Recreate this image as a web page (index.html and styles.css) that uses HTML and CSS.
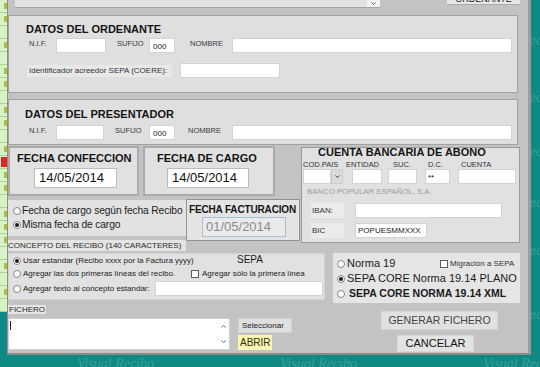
FILE: index.html
```html
<!DOCTYPE html>
<html lang="es">
<head>
<meta charset="utf-8">
<title>Generar fichero</title>
<link rel="stylesheet" href="styles.css">
</head>
<body>
<div class="wm wm-r1">Visual Recibo</div>
<div class="wm wm-r2">Visual Recibo</div>
<div class="wm wm-r3">Visual Recibo</div>
<div class="wm wm-r4">Visual Recibo</div>
<div class="wm wm-r5">Visual Recibo</div>
<div class="wm wm-r6">Visual Recibo</div>
<div class="wm wm-b1">Visual Recibo</div>
<div class="wm wm-b2">Visual Recibo</div>
<div class="wm wm-b3">Visual Recibo</div>

<div class="strip">
  <div class="cell"><span class="mk"></span></div>
  <div class="cell"><span class="mk"></span></div>
  <div class="cell"></div>
  <div class="cell"><span class="mk"></span></div>
  <div class="cell"></div>
  <div class="cell"><span class="mk"></span></div>
  <div class="cell"><span class="mk"></span></div>
  <div class="cell"></div>
  <div class="cell"><span class="mk"></span></div>
  <div class="cell"><span class="mk"></span></div>
  <div class="cell"></div>
  <div class="cell"><span class="mk"></span></div>
  <div class="cell"><span class="mk red"></span></div>
  <div class="cell"><span class="mk"></span></div>
  <div class="cell"><span class="mk"></span></div>
  <div class="cell"></div>
  <div class="cell"><span class="mk"></span></div>
  <div class="cell"><span class="mk"></span></div>
  <div class="cell"><span class="mk"></span></div>
  <div class="cell"></div>
  <div class="cell"><span class="mk"></span></div>
  <div class="cell"></div>
  <div class="cell"><span class="mk"></span></div>
  <div class="cell"></div>
</div>

<div class="dlg">
  <div class="toprow">
    <div class="combo"><span class="combo-arrow"><svg width="5" height="3" viewBox="0 0 5 3"><path d="M0.5 0.5 L2.5 2.5 L4.5 0.5" fill="none" stroke="#555" stroke-width="1"/></svg></span></div>
    <div class="topbtn"><span>ORDENANTE</span></div>
  </div>

  <div class="panel ord">
    <div class="ptitle">DATOS DEL ORDENANTE</div>
    <div class="frow ord-r1">
      <span class="lbl o-nif">N.I.F.</span><span class="inp o-nifin"></span>
      <span class="lbl o-suf">SUFIJO</span><span class="inp suf">000</span>
      <span class="lbl o-nom">NOMBRE</span><span class="inp nom"></span>
    </div>
    <div class="frow ord-r2">
      <span class="coere">Identificador acreedor SEPA (COERE):</span><span class="inp coere-in"></span>
    </div>
  </div>

  <div class="panel pre">
    <div class="ptitle">DATOS DEL PRESENTADOR</div>
    <div class="frow pre-r1">
      <span class="lbl p-nif">N.I.F.</span><span class="inp p-nifin"></span>
      <span class="lbl p-suf">SUFIJO</span><span class="inp suf">000</span>
      <span class="lbl p-nom">NOMBRE</span><span class="inp nom"></span>
    </div>
  </div>

  <div class="mid">
    <div class="midleft">
      <div class="fechas">
        <div class="fbox fb1"><div class="ftitle">FECHA CONFECCION</div><div class="finp">14/05/2014</div></div>
        <div class="fbox fb2"><div class="ftitle">FECHA DE CARGO</div><div class="finp">14/05/2014</div></div>
      </div>
      <div class="row2">
        <div class="rpanel">
          <div class="rrow"><span class="rb"></span><span class="rt">Fecha de cargo según fecha Recibo</span></div>
          <div class="rrow"><span class="rb on"></span><span class="rt">Misma fecha de cargo</span></div>
        </div>
        <div class="factbox">
          <div class="facttitle">FECHA FACTURACION</div>
          <div class="factinp">01/05/2014</div>
        </div>
      </div>
      <div class="conlabel">CONCEPTO DEL RECIBO (140 CARACTERES)</div>
    </div>

    <div class="panel cuenta">
      <div class="ctitle">CUENTA BANCARIA DE ABONO</div>
      <div class="clabels"><span class="cl1">COD.PAIS</span><span class="cl2">ENTIDAD</span><span class="cl3">SUC.</span><span class="cl4">D.C.</span><span>CUENTA</span></div>
      <div class="cinputs">
        <span class="inp c-sel"></span><span class="c-selbtn"><svg width="5" height="3" viewBox="0 0 5 3"><path d="M0.5 0.5 L2.5 2.5 L4.5 0.5" fill="none" stroke="#444" stroke-width="1"/></svg></span>
        <span class="inp c-ent"></span>
        <span class="inp c-suc"></span>
        <span class="inp c-dc">**</span>
        <span class="inp c-cta"></span>
      </div>
      <div class="banco">BANCO POPULAR ESPAÑOL, S.A.</div>
      <div class="crow iban"><span class="clab">IBAN:</span><span class="inp c-iban"></span></div>
      <div class="crow bic"><span class="clab">BIC</span><span class="inp c-bic">POPUESMMXXX</span></div>
    </div>
  </div>

  <div class="lower">
    <div class="concept">
      <div class="kr kr1"><span class="rb on"></span><span class="ct ct1">Usar estandar (Recibo xxxx por la Factura yyyy)</span><span class="sepa">SEPA</span></div>
      <div class="kr kr2"><span class="rb"></span><span class="ct ct2">Agregar las dos primeras líneas del recibo.</span><span class="cb"></span><span class="ct ct2b">Agregar sólo la primera línea</span></div>
      <div class="kr kr3"><span class="rb"></span><span class="ct ct3">Agregar texto al concepto estandar:</span><span class="inp con-in"></span></div>
    </div>
    <div class="opts">
      <div class="or"><span class="rb"></span><span class="ot ot1">Norma 19</span><span class="cb"></span><span class="mig">Migración a SEPA</span></div>
      <div class="or"><span class="rb on"></span><span class="ot">SEPA CORE Norma 19.14 PLANO</span></div>
      <div class="or"><span class="rb"></span><span class="ot ot3">SEPA CORE NORMA 19.14 XML</span></div>
    </div>
  </div>

  <div class="bottom">
    <div class="bleft">
      <div class="fich">FICHERO</div>
      <div class="frow2">
        <div class="ta">
          <div class="ta-body"><span class="caret"></span></div>
          <div class="ta-scroll">
            <svg width="5" height="3" viewBox="0 0 5 3"><path d="M0.5 2.5 L2.5 0.5 L4.5 2.5" fill="none" stroke="#666" stroke-width="1"/></svg>
            <svg width="5" height="3" viewBox="0 0 5 3"><path d="M0.5 0.5 L2.5 2.5 L4.5 0.5" fill="none" stroke="#666" stroke-width="1"/></svg>
          </div>
        </div>
        <div class="bbtns">
          <div class="selbtn">Seleccionar</div>
          <div class="abrir">ABRIR</div>
        </div>
      </div>
    </div>
    <div class="bright">
      <div class="gen">GENERAR FICHERO</div>
      <div class="can">CANCELAR</div>
    </div>
  </div>
</div>
</body>
</html>
```

FILE: styles.css
```css
* { box-sizing: border-box; }
body {
  margin: 0;
  width: 540px;
  height: 367px;
  overflow: hidden;
  position: relative;
  background: #0e8983;
  font-family: "Liberation Sans", Arial, sans-serif;
  color: #1e1e1e;
}

/* desktop watermark */
.wm {
  position: absolute;
  font: italic 14px/14px "Liberation Serif", serif;
  color: #3aa097;
  white-space: nowrap;
}
.wm-r1 { left: 483px; top: 34px; }
.wm-r2 { left: 483px; top: 91px; }
.wm-r3 { left: 483px; top: 145px; }
.wm-r4 { left: 483px; top: 196px; }
.wm-r5 { left: 483px; top: 244px; }
.wm-r6 { left: 483px; top: 308px; }
.wm-b1 { left: 77px; top: 357px; }
.wm-b2 { left: 280px; top: 357px; }
.wm-b3 { left: 483px; top: 357px; }

/* list strip on the left */
.strip {
  position: absolute;
  left: 0;
  top: 0;
  width: 7px;
  height: 312px;
  background: #d8f3c8;
  display: flex;
  flex-direction: column;
}
.cell {
  height: 13px;
  border-bottom: 1px solid #a3d88b;
  display: flex;
  align-items: center;
  justify-content: flex-end;
}
.mk { width: 3px; height: 6px; background: #b6bd3c; }
.mk.red { width: 6px; height: 10px; background: #e3241f; }

/* dialog window */
.dlg {
  position: absolute;
  left: 7px;
  top: 0;
  width: 524px;
  height: 355px;
  background: #c3c3c3;
  border-left: 1px solid #8e8e8e;
  border-right: 3px solid #9d9d9d;
  border-bottom: 2px solid #8a8a8a;
  display: flex;
  flex-direction: column;
  align-items: flex-start;
}

.toprow { display: flex; align-items: flex-start; height: 9px; }
.combo {
  margin-left: 7px;
  width: 365px;
  height: 8px;
  background: #e3e3e3;
  border-bottom: 1px solid #a4a4a4;
  display: flex;
  justify-content: flex-end;
}
.combo-arrow {
  width: 13px;
  height: 7px;
  background: #f3f3f3;
  display: flex;
  align-items: center;
  justify-content: center;
}
.topbtn {
  margin-left: 67px;
  width: 73px;
  height: 5px;
  background: #e6e6e6;
  border-bottom: 1px solid #ababab;
  overflow: hidden;
  font-size: 9px;
  line-height: 9px;
  text-align: center;
  color: #222;
}
.topbtn span { display: block; margin-top: -5px; }

.panel { background: #dfdfdf; border: 1px solid #a2a2a2; }
.ptitle { font-weight: bold; font-size: 11px; line-height: 13px; color: #151515; white-space: nowrap; }

.frow { display: flex; align-items: flex-start; height: 15px; }
.lbl { font-size: 7.5px; line-height: 9px; margin-top: 1px; color: #3a3a3a; white-space: nowrap; }
.inp { display: block; height: 15px; background: #fff; border: 1px solid #d3d3d3; font-size: 8px; color: #1a1a1a; white-space: nowrap; }

.ord { margin-top: 6px; width: 510px; height: 78px; padding-top: 7px; }
.ord .ptitle { padding-left: 17px; }
.ord-r1 { margin-top: 2px; padding-left: 20px; }
.o-nif { width: 27px; }
.o-nifin { width: 50px; }
.o-suf { margin-left: 11px; width: 32px; }
.o-nom { margin-left: 15px; width: 42px; }
.suf { width: 26px; padding: 1px 0 0 3px; line-height: 13px; }
.nom { width: 280px; }
.ord-r2 { margin-top: 10px; padding-left: 18px; }
.coere {
  margin-top: 2px;
  width: 145px;
  height: 12px;
  padding-left: 2px;
  background: #e8e8e8;
  font-size: 8px;
  line-height: 12px;
  color: #333;
  white-space: nowrap;
}
.coere-in { margin-left: 8px; width: 100px; }

.pre { margin-top: 6px; width: 510px; height: 46px; padding-top: 8px; }
.pre .ptitle { padding-left: 16px; }
.pre-r1 { margin-top: 4px; padding-left: 20px; }
.p-nif { width: 27px; }
.p-nifin { width: 48px; }
.p-suf { margin-left: 11px; width: 34px; }
.p-nom { margin-left: 13px; width: 44px; }

/* middle block */
.mid { margin-top: 1px; display: flex; align-items: flex-start; height: 105px; }
.midleft { width: 292px; display: flex; flex-direction: column; align-items: flex-start; }
.fechas { display: flex; height: 50px; }
.fbox { height: 50px; border: 2px solid #ababab; background: #e1e1e1; padding-top: 4px; }
.fb1 { width: 131px; padding-left: 7px; }
.fb2 { margin-left: 4px; width: 132px; padding-left: 12px; }
.ftitle { font-weight: bold; font-size: 11px; line-height: 13px; color: #151515; white-space: nowrap; }
.finp {
  margin-top: 3px;
  width: 83px;
  height: 20px;
  background: #fff;
  border: 1px solid #bcbcbc;
  font-size: 13px;
  line-height: 18px;
  padding-left: 4px;
  color: #111;
}
.fb1 .finp { margin-left: 17px; }
.fb2 .finp { margin-left: 10px; width: 82px; }

.row2 { margin-top: 3px; display: flex; align-items: flex-start; height: 42px; }
.rpanel { margin-top: 1px; width: 178px; height: 36px; background: #e2e2e2; padding: 4px 0 0 5px; }
.rrow { display: flex; align-items: center; height: 14px; }
.rt { margin-left: 1px; font-size: 10.3px; line-height: 14px; letter-spacing: -0.15px; white-space: nowrap; color: #1e1e1e; }

.rb {
  width: 8px;
  height: 8px;
  border: 1px solid #858585;
  border-radius: 50%;
  background: #fff;
  display: flex;
  align-items: center;
  justify-content: center;
  flex: none;
}
.rb.on::after { content: ""; width: 4px; height: 4px; border-radius: 50%; background: #1a1a1a; }
.cb { width: 8px; height: 8px; border: 1px solid #5c5c5c; background: #fff; flex: none; }

.factbox { width: 114px; height: 42px; border: 1px solid #929292; background: #e4e4e4; padding: 4px 0 0 2px; }
.facttitle { font-weight: bold; font-size: 10px; line-height: 12px; letter-spacing: -0.15px; color: #151515; white-space: nowrap; }
.factinp {
  margin: 1px 0 0 13px;
  width: 84px;
  height: 20px;
  border: 1px solid #a7bed6;
  background: #eaeaea;
  color: #8a8a8a;
  font-size: 13px;
  line-height: 18px;
  padding-left: 3px;
}
.conlabel {
  margin-top: -1px;
  width: 178px;
  height: 11px;
  background: #e4e4e4;
  font-size: 8px;
  line-height: 11px;
  color: #2a2a2a;
  white-space: nowrap;
}

.cuenta { margin: 1px 0 0 1px; width: 219px; height: 96px; background: #e1e1e1; border-color: #9a9a9a; }
.ctitle { margin-top: -1px; padding-left: 16px; font-weight: bold; font-size: 11px; line-height: 11px; color: #151515; white-space: nowrap; }
.clabels { margin-top: 2px; display: flex; padding-left: 1px; font-size: 7.5px; line-height: 9px; color: #333; white-space: nowrap; }
.cl1 { width: 43px; }
.cl2 { width: 47px; }
.cl3 { width: 35px; }
.cl4 { width: 33px; }
.cinputs { display: flex; padding-left: 1px; height: 15px; }
.c-sel { width: 28px; }
.c-selbtn {
  width: 12px;
  height: 15px;
  background: #dadada;
  border: 1px solid #cdcdcd;
  display: flex;
  align-items: center;
  justify-content: center;
}
.c-ent { margin-left: 9px; width: 30px; }
.c-suc { margin-left: 6px; width: 29px; }
.c-dc { margin-left: 8px; width: 25px; padding-left: 2px; font-size: 8px; line-height: 15px; }
.c-cta { margin-left: 8px; width: 58px; }
.banco { margin-top: 3px; padding-left: 5px; font-size: 7.8px; line-height: 10px; color: #9b9b9b; white-space: nowrap; }
.crow { display: flex; height: 15px; }
.crow.iban { margin-top: 6px; }
.crow.bic { margin-top: 5px; }
.clab { margin-left: 9px; width: 33px; height: 15px; background: #ebebeb; font-size: 8px; line-height: 15px; padding-left: 1px; color: #333; }
.c-iban { margin-left: 11px; width: 147px; }
.c-bic { margin-left: 11px; width: 72px; line-height: 13px; padding-left: 2px; }

/* lower option blocks */
.lower { margin-top: 2px; display: flex; align-items: flex-start; height: 50px; }
.concept { width: 317px; height: 47px; background: #e1e1e1; border: 1px solid #d3d3d3; padding: 1px 0 0 4px; }
.kr { display: flex; align-items: center; }
.kr1 { height: 12px; }
.kr2 { height: 13px; }
.kr3 { margin-top: 1px; height: 15px; }
.ct { margin-left: 2px; font-size: 8px; line-height: 12px; white-space: nowrap; color: #222; }
.ct1 { width: 214px; }
.sepa { align-self: flex-start; margin-top: -1px; font-size: 10px; line-height: 12px; color: #1a1a1a; }
.ct2 { width: 168px; }
.ct2b { margin-left: 3px; }
.ct3 { width: 132px; }
.con-in { width: 168px; }

.opts { margin-left: 8px; width: 187px; height: 50px; background: #e5e5e5; padding: 3px 0 0 4px; }
.or { display: flex; align-items: center; height: 15px; }
.ot { margin-left: 2px; font-size: 11px; line-height: 15px; white-space: nowrap; color: #1a1a1a; }
.ot1 { width: 93px; }
.mig { margin-left: 2px; font-size: 8px; color: #333; white-space: nowrap; }
.ot3 { margin-left: 4px; font-weight: bold; font-size: 10.5px; }

/* bottom: file + buttons */
.bottom { margin-top: 2px; display: flex; align-items: flex-start; }
.bleft { width: 284px; display: flex; flex-direction: column; align-items: flex-start; }
.fich { width: 38px; height: 9px; background: #e6e6e6; font-size: 8px; line-height: 9px; padding-left: 1px; color: #2a2a2a; }
.frow2 { margin-top: 4px; display: flex; align-items: flex-start; }
.ta { width: 222px; height: 32px; background: #fff; border: 1px solid #cfcfcf; display: flex; }
.ta-body { flex: 1; padding: 2px 0 0 1px; }
.caret { display: block; width: 1px; height: 9px; background: #222; }
.ta-scroll {
  width: 12px;
  display: flex;
  flex-direction: column;
  align-items: center;
  justify-content: space-between;
  padding: 6px 0;
}
.bbtns { margin-left: 8px; display: flex; flex-direction: column; align-items: flex-start; }
.selbtn { width: 54px; height: 15px; background: #dfdfdf; border: 1px solid #d2d2d2; font-size: 8px; line-height: 13px; padding-left: 3px; color: #222; }
.abrir { margin-top: 2px; width: 34px; height: 15px; background: #fbf6b3; font-size: 10px; line-height: 15px; padding-left: 2px; color: #2e2e10; }
.bright { margin-left: 89px; display: flex; flex-direction: column; align-items: flex-start; }
.gen {
  margin-top: 6px;
  width: 117px;
  height: 19px;
  background: #e1e1e1;
  border: 1px solid #d5d5d5;
  font-size: 10.5px;
  line-height: 17px;
  text-align: center;
  color: #444;
}
.can {
  margin: 5px 0 0 16px;
  width: 77px;
  height: 17px;
  background: #e3e3e3;
  border: 1px solid #d6d6d6;
  font-size: 11px;
  line-height: 15px;
  text-align: center;
  color: #111;
}
```
